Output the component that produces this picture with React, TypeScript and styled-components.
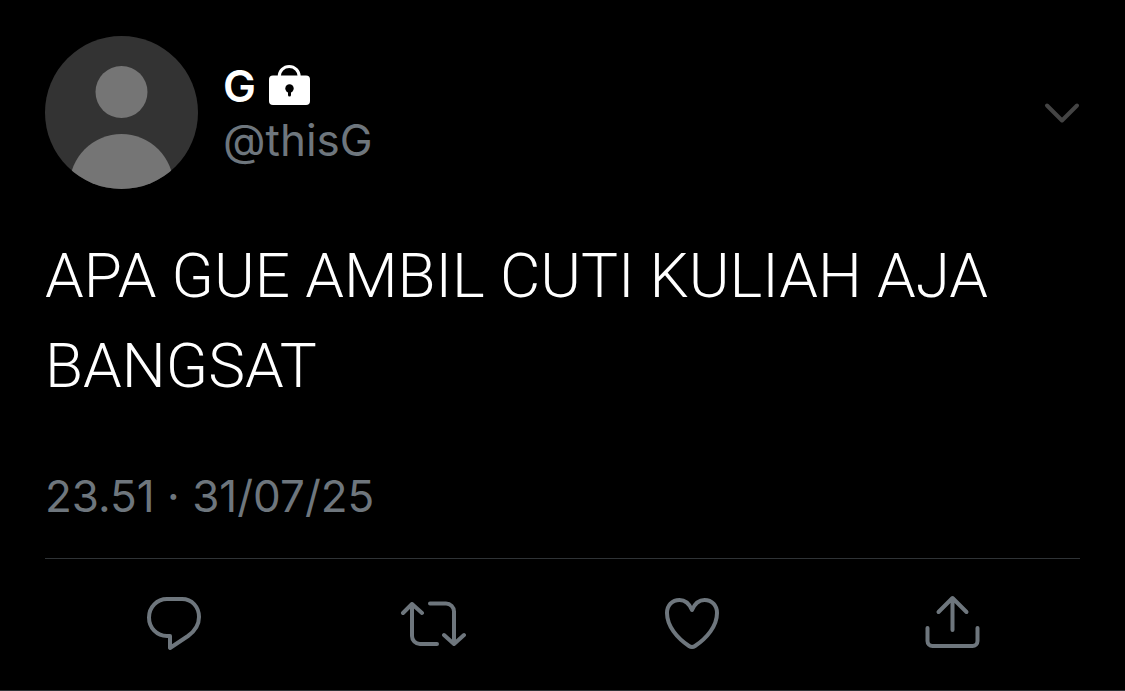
import React from "react";
import styled, { createGlobalStyle } from "styled-components";

const GlobalStyle = createGlobalStyle`
  *, *::before, *::after { box-sizing: border-box; }
  body {
    margin: 0;
    background: #000;
    color: #fff;
    font-family: Inter, "Liberation Sans", sans-serif;
  }
`;

const Post = styled.article`
  min-height: 100vh;
  padding: 36px 45px 0;
  border-bottom: 1px solid #2f3336;
`;

const Header = styled.header`
  display: flex;
  align-items: center;
  gap: 25px;
`;

const Avatar = styled.svg`
  flex: none;
  width: 153px;
  height: 153px;
  border-radius: 50%;
  background: #333;
`;

const Author = styled.div`
  flex: 1;
  min-width: 0;
`;

const Name = styled.h1`
  display: flex;
  align-items: center;
  gap: 13px;
  margin: 0;
  font-size: 44px;
  font-weight: 600;
  line-height: 54px;
`;

const Handle = styled.a`
  display: block;
  color: #6e767d;
  font-size: 44px;
  line-height: 54px;
  text-decoration: none;
`;

const IconButton = styled.button`
  display: flex;
  align-items: center;
  justify-content: center;
  padding: 0;
  border: 0;
  background: none;
  color: #6e767d;
  cursor: pointer;
`;

const MoreButton = styled(IconButton)`
  color: #444;
`;

const Icon = styled.svg`
  display: block;
  flex: none;
  fill: none;
  stroke: currentColor;
  stroke-width: 4;
  stroke-linecap: round;
  stroke-linejoin: round;
`;

const Message = styled.p`
  margin: 42px 0 0;
  font-family: Roboto, Inter, sans-serif;
  font-size: 62px;
  font-weight: 300;
  line-height: 90px;
`;

const Timestamp = styled.time`
  display: block;
  margin-top: 58px;
  color: #6e767d;
  font-size: 44px;
  line-height: 54px;
`;

const Actions = styled.footer`
  display: grid;
  grid-template-columns: repeat(4, 1fr);
  justify-items: center;
  margin-top: 35px;
  padding: 36px 0 34px;
  border-top: 1px solid #2f3336;
`;

export default function App() {
  return (
    <>
      <GlobalStyle />
      <Post>
        <Header>
          <Avatar viewBox="0 0 153 153" role="img" aria-label="Avatar" fill="#757575">
            <circle cx="76.5" cy="56" r="26" />
            <circle cx="76.5" cy="150" r="52" />
          </Avatar>
          <Author>
            <Name>
              G
              <svg width="41" height="41" viewBox="0 0 41 41" role="img" aria-label="Protected account">
                <path d="M10.2 13V11.5a10 10 0 0 1 20 0V13" fill="none" stroke="#fff" strokeWidth="3" />
                <rect y="10.5" width="41" height="29.5" rx="4" fill="#fff" />
                <circle cx="20.5" cy="23.5" r="4.2" fill="#000" />
                <path d="M20.5 24v6" stroke="#000" strokeWidth="3" strokeLinecap="round" />
              </svg>
            </Name>
            <Handle href="#profile">@thisG</Handle>
          </Author>
          <MoreButton aria-label="More">
            <Icon width="36" height="24" viewBox="0 0 36 24">
              <path d="M3 4.5 18 19.5 33 4.5" />
            </Icon>
          </MoreButton>
        </Header>
        <Message>APA GUE AMBIL CUTI KULIAH AJA BANGSAT</Message>
        <Timestamp dateTime="2025-07-31T23:51">23.51 · 31/07/25</Timestamp>
        <Actions>
          <IconButton aria-label="Reply">
            <Icon width="58" height="58" viewBox="0 0 58 58">
              <path d="M25 41H22C12 41 4 33 4 22.5S12 4 22 4H37C47 4 54 12 54 22C54 30 50 36 43 41L25 53Z" />
            </Icon>
          </IconButton>
          <IconButton aria-label="Repost">
            <Icon width="66" height="58" viewBox="0 0 66 58">
              <path d="M3 18 12 9 22 18M12 9V41a8 8 0 0 0 8 8H37M30 8.5H46a8 8 0 0 1 8 8V49M44 40 54 49 64 40" />
            </Icon>
          </IconButton>
          <IconButton aria-label="Like">
            <Icon width="58" height="58" viewBox="0 0 58 58">
              <path d="M29 15C26 8 21 5 16.5 5C9 5 4 10.5 4 18C4 31 14 43 26 51Q29 53 32 51C44 43 54 31 54 18C54 10.5 49 5 41.5 5C37 5 32 8 29 15Z" />
            </Icon>
          </IconButton>
          <IconButton aria-label="Share">
            <Icon width="58" height="58" viewBox="0 0 58 58">
              <path d="M30.5 35V3M16.5 17 30.5 3 44.5 17M5.5 33V46a5 5 0 0 0 5 5H50.5a5 5 0 0 0 5-5V33" />
            </Icon>
          </IconButton>
        </Actions>
      </Post>
    </>
  );
}
